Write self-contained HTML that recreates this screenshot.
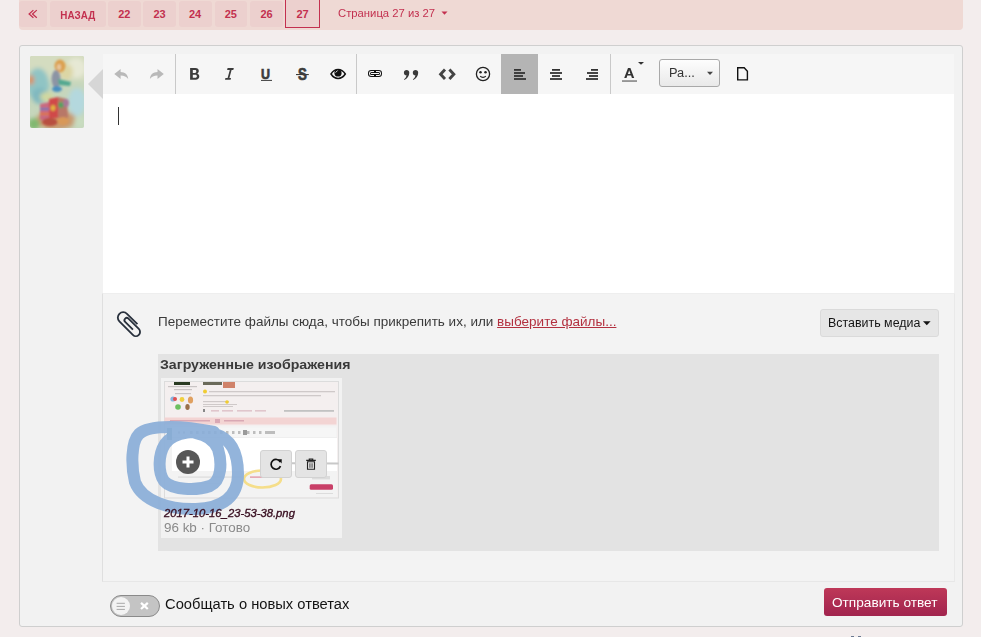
<!DOCTYPE html>
<html><head><meta charset="utf-8">
<style>
*{box-sizing:border-box;margin:0;padding:0}
html,body{width:981px;height:637px;overflow:hidden;background:#f3eded;font-family:"Liberation Sans",sans-serif;position:relative}
.a{position:absolute}
#pbar{left:19px;top:-4px;width:944px;height:34px;background:#efd9d4;border-radius:4px}
.pb{position:absolute;top:1px;height:25.5px;background:#ecd0ce;border-radius:3px;color:#c3304f;font-weight:bold;font-size:11px;text-align:center;line-height:25px;padding-top:1px}
.pt{display:inline-block}
#box{left:19px;top:45px;width:944px;height:582px;background:#f2f2f2;border:1px solid #cfcfcf;border-radius:3px}
#tb{left:103px;top:54px;width:851px;height:40px;background:#f6f6f6}
#ct{left:103px;top:94px;width:851px;height:199px;background:#fff}
#att{left:102px;top:293px;width:853px;height:289px;background:#f3f3f3;border-left:1px solid #dfdfdf;border-right:1px solid #e9e9e9;border-bottom:1px solid #e7e7e7;border-top:1px solid #eeeeee}
.sep{position:absolute;top:54px;width:1px;height:40px;background:#c9c9c9}
.ic{position:absolute}
.t{transform-origin:0 0;white-space:nowrap}
</style></head><body>
<div id="pbar" class="a"></div>
<div class="pb" style="left:19px;width:28px"></div>
<svg class="a" style="left:27px;top:8px" width="12" height="12"><path d="M6.4,2.1 L2.1,6 L6.4,9.7 M9.8,2.1 L5.5,6 L9.8,9.7" fill="none" stroke="#c3304f" stroke-width="1.25"/></svg>
<div class="pb" style="left:50px;width:56px"><span id="p_naz" class="pt" style="font-size:10px;transform:scaleX(0.985);position:relative;top:0.6px">НАЗАД</span></div>
<div class="pb" style="left:107.5px;width:33.5px"><span class="pt">22</span></div>
<div class="pb" style="left:143px;width:33px"><span class="pt">23</span></div>
<div class="pb" style="left:178.5px;width:33px"><span class="pt">24</span></div>
<div class="pb" style="left:214.5px;width:32.5px"><span class="pt">25</span></div>
<div class="pb" style="left:250px;width:33px"><span class="pt">26</span></div>
<div class="pb" style="left:285px;width:35px;top:-2px;height:29.5px;border:1px solid #c3304f;border-radius:0;padding-top:3px"><span class="pt">27</span></div>
<div id="t_page" class="a t" style="transform:scaleX(0.981);left:338px;top:6px;font-size:11.5px;color:#c3304f;line-height:14px">Страница 27 из 27</div>
<svg class="a" style="left:441px;top:11px" width="8" height="5"><path d="M0.5,0.5 H6.5 L3.5,3.8 Z" fill="#c3304f"/></svg>

<div id="box" class="a"></div>
<div id="tb" class="a"></div>
<div id="ct" class="a"></div>
<div id="att" class="a"></div>
<div class="sep" style="left:175px"></div>
<div class="sep" style="left:356px"></div>
<div class="sep" style="left:610px"></div>
<div class="a" style="left:501px;top:54px;width:37px;height:40px;background:#b4b4b4"></div>
<svg class="a" style="left:0;top:0" width="981" height="637" viewBox="0 0 981 637">
 <!-- undo -->
 <path fill="#b9b9b9" d="M114.3,73.9 L120.6,68.9 L120.6,71.9 C124.8,72 127.9,74.2 128.2,79 C126.6,76.9 124.2,75.6 120.6,75.6 L120.6,79 Z"/>
 <!-- redo -->
 <path fill="#b9b9b9" d="M163.8,73.9 L157.5,68.9 L157.5,71.9 C153.3,72 150.2,74.2 149.9,79 C151.5,76.9 153.9,75.6 157.5,75.6 L157.5,79 Z"/>
 <!-- bold -->
 <path fill="#3c3c3c" fill-rule="evenodd" d="M190.1,68.1 H195.3 C197.6,68.1 198.8,69.3 198.8,71 C198.8,72.2 198.2,73 197.2,73.5 C198.6,74 199.3,75.1 199.3,76.6 C199.3,78.6 197.9,79.7 195.6,79.7 H190.1 Z M192.8,70.1 V72.9 H194.9 C195.9,72.9 196.3,72.4 196.3,71.5 C196.3,70.6 195.9,70.1 194.9,70.1 Z M192.8,74.8 V77.8 H195.3 C196.4,77.8 196.9,77.2 196.9,76.3 C196.9,75.4 196.4,74.8 195.3,74.8 Z"/>
 <!-- italic -->
 <path fill="#3c3c3c" d="M227.6,68.1 H233.8 L233.3,69.9 H231.6 L229.4,78 H231 L230.6,79.7 H225 L225.4,78 H227.6 L229.8,69.9 H227.1 Z"/>
 <!-- underline -->
 <text x="318.4" y="78.8" font-family="Liberation Sans" font-weight="bold" font-size="15.2" fill="#3c3c3c" stroke="#3c3c3c" stroke-width="0.7" transform="scale(0.82,1)">U</text>
 <rect x="261" y="79.9" width="11" height="1" fill="#3c3c3c"/>
 <!-- strike -->
 <text x="363.3" y="79.9" font-family="Liberation Sans" font-weight="bold" font-size="16.2" fill="#3c3c3c" stroke="#3c3c3c" stroke-width="0.7" transform="scale(0.82,1)">S</text>
 <rect x="296" y="74" width="12.8" height="1.1" fill="#3c3c3c"/>
 <!-- eye -->
 <path fill="none" stroke="#111" stroke-width="1.5" d="M331,74 C333,70.8 335.3,69.6 338.1,69.6 C340.9,69.6 343.2,70.8 345.3,74 C343.2,77.2 340.9,78.4 338.1,78.4 C335.3,78.4 333,77.2 331,74 Z"/>
 <circle cx="338" cy="72.9" r="3.6" fill="#111"/>
 <path stroke="#f6f6f6" stroke-width="0.9" d="M335.6,72.6 L337.6,70.5"/>
 <!-- link -->
 <rect x="368" y="70" width="14" height="7" rx="3.2" fill="#111"/>
 <rect x="369" y="71" width="12" height="5" rx="2.2" fill="#f6f6f6"/>
 <rect x="370" y="72" width="10" height="3" rx="1.5" fill="#111"/>
 <rect x="371" y="73" width="8" height="1" fill="#f6f6f6"/>
 <rect x="374" y="71" width="2" height="1" fill="#111"/>
 <rect x="374" y="75" width="2" height="1" fill="#111"/>
 <!-- quote -->
 <path fill="#3a3a3a" d="M406.6,70 C408.2,70 409.3,71 409.3,72.7 C409.3,75.6 407.3,78.4 404.3,80 L404.0,79.5 C405.4,78.4 406.2,77.2 406.5,75.3 C404.9,75.3 403.9,74.3 403.9,72.7 C403.9,71.1 405.0,70 406.6,70 Z M415.5,70 C417.1,70 418.2,71 418.2,72.7 C418.2,75.6 416.2,78.4 413.2,80 L412.9,79.5 C414.3,78.4 415.1,77.2 415.4,75.3 C413.8,75.3 412.8,74.3 412.8,72.7 C412.8,71.1 413.9,70 415.5,70 Z"/>
 <!-- code -->
 <path fill="none" stroke="#444" stroke-width="2.9" stroke-linejoin="miter" d="M445,69.6 L440.6,74.3 L445,79 M449.4,69.6 L453.8,74.3 L449.4,79"/>
 <!-- smile -->
 <circle cx="483" cy="74" r="6.6" fill="none" stroke="#222" stroke-width="1.3"/>
 <circle cx="480.5" cy="72.2" r="1.25" fill="#222"/>
 <circle cx="485.5" cy="72.2" r="1.25" fill="#222"/>
 <path fill="none" stroke="#222" stroke-width="1.2" d="M480.2,76.2 C481.6,77.8 484.4,77.8 485.8,76.2"/>
 <!-- align left -->
 <g fill="#333"><rect x="514" y="69" width="7" height="1.8"/><rect x="514" y="72.1" width="11" height="1.8"/><rect x="514" y="75.1" width="9" height="1.8"/><rect x="514" y="78.1" width="12" height="1.8"/></g>
 <g fill="#333"><rect x="552" y="69" width="8" height="1.8"/><rect x="550" y="72.1" width="12" height="1.8"/><rect x="552" y="75.1" width="8" height="1.8"/><rect x="550" y="78.1" width="12" height="1.8"/></g>
 <g fill="#333"><rect x="591" y="69" width="7" height="1.8"/><rect x="587" y="72.1" width="11" height="1.8"/><rect x="589" y="75.1" width="9" height="1.8"/><rect x="586" y="78.1" width="12" height="1.8"/></g>
 <!-- font color A -->
 <path fill="#333" fill-rule="evenodd" d="M628,68 H630.4 L634.2,77.9 H631.9 L631.1,75.6 H627.3 L626.5,77.9 H624.2 Z M629.2,70.2 L627.9,73.9 H630.5 Z"/>
 <rect x="622" y="80.2" width="15" height="1.7" fill="#8c8c8c"/>
 <path fill="#333" d="M638,62 H644 L641,64.8 Z"/>
 <!-- doc -->
 <path fill="none" stroke="#111" stroke-width="1.4" d="M737.7,67.8 H744.2 L747.4,71.2 V79.9 H737.7 Z"/>
</svg>
<div class="a" style="left:659px;top:59px;width:61px;height:28px;border:1px solid #a9a9a9;border-radius:3px;background:linear-gradient(#fdfdfd,#e9e9e9)"></div>
<div id="t_ra" class="a t" style="transform:scaleX(1.065);left:669px;top:65px;font-size:12px;color:#333;line-height:16px">Ра...</div>
<svg class="a" style="left:706px;top:71px" width="8" height="5"><path d="M1,0.8 H7 L4,4 Z" fill="#444"/></svg>
<!-- avatar -->
<svg class="a" style="left:30px;top:56px" width="54" height="72" viewBox="0 0 54 72">
 <defs><filter id="bl" x="-30%" y="-30%" width="160%" height="160%"><feGaussianBlur stdDeviation="2.2"/></filter>
 <filter id="bl2" x="-30%" y="-30%" width="160%" height="160%"><feGaussianBlur stdDeviation="1"/></filter>
 <clipPath id="avc"><rect width="54" height="72" rx="2"/></clipPath></defs>
 <g clip-path="url(#avc)">
 <rect width="54" height="72" fill="#c6d6bc"/>
 <g filter="url(#bl)">
  <rect x="-5" y="-5" width="64" height="30" fill="#d4dcc0"/>
  <ellipse cx="8" cy="28" rx="11" ry="16" fill="#90c4c4"/>
  <ellipse cx="10" cy="40" rx="8" ry="8" fill="#7fb8c0"/>
  <ellipse cx="46" cy="12" rx="10" ry="10" fill="#e6e8d4"/>
  <ellipse cx="47" cy="46" rx="9" ry="14" fill="#b4d8de"/>
  <ellipse cx="36" cy="16" rx="7" ry="8" fill="#dcd6a4"/>
  <ellipse cx="1" cy="24" rx="3" ry="5" fill="#e08a50"/>
  <ellipse cx="17" cy="41" rx="7" ry="5" fill="#d0d8a0"/>
  <ellipse cx="26" cy="64" rx="20" ry="10" fill="#c89a70"/>
  <ellipse cx="4" cy="68" rx="6" ry="6" fill="#80b870"/>
  <ellipse cx="50" cy="66" rx="6" ry="6" fill="#c8dcc0"/>
 </g>
 <g filter="url(#bl2)">
  <ellipse cx="30" cy="10" rx="5.5" ry="6.5" fill="#dca050"/>
  <ellipse cx="29" cy="11" rx="2" ry="3" fill="#e8c8a0"/>
  <ellipse cx="26" cy="23" rx="4.5" ry="9" fill="#8c94a4"/>
  <path d="M28,23 L41,26 L40,30 L29,29 Z" fill="#52a890"/>
  <ellipse cx="27" cy="33" rx="5" ry="3" fill="#4a90c0"/>
  <path d="M10,48 L19,46 L19,64 L10,64 Z" fill="#c86a80"/>
  <rect x="10" y="52" width="9" height="2" fill="#6a78b8"/>
  <rect x="10" y="57" width="9" height="2" fill="#e07840"/>
  <path d="M19,43 L28,41 L28,62 L19,62 Z" fill="#d04848"/>
  <ellipse cx="23" cy="52" rx="2.5" ry="3" fill="#e0b040"/>
  <path d="M28,41 L37,43 L38,62 L28,62 Z" fill="#b87868"/>
  <ellipse cx="31" cy="49" rx="3" ry="3" fill="#58a060"/>
  <ellipse cx="36" cy="47" rx="3" ry="4" fill="#a87898"/>
  <ellipse cx="20" cy="66" rx="8" ry="4" fill="#b85040"/>
  <ellipse cx="33" cy="65" rx="6" ry="4" fill="#d89858"/>
 </g>
 </g>
</svg>
<svg class="a" style="left:88px;top:69px" width="15" height="30"><path d="M15,0 V30 L0,15 Z" fill="#d6d6d6"/></svg>
<div class="a" style="left:118px;top:107px;width:1px;height:18px;background:#333"></div>


<!-- attach -->
<svg class="a" style="left:105px;top:300px" width="48" height="48" viewBox="0 0 48 48">
 <g transform="translate(24.8,24.2) rotate(-45) scale(1.17)">
 <path fill="none" stroke="#28303c" stroke-width="1.55" stroke-linecap="butt" d="M4.6,4.6 V-8 A4.6,4.6 0 0 0 -4.6,-8 V8.3 A3.6,3.6 0 0 0 2.6,8.3 V-4.2 A2,2 0 0 0 -1.4,-4.2 V5.2"/>
 </g>
</svg>
<div id="t_drop" class="a t" style="transform:scaleX(1.0385);left:158px;top:314px;font-size:13px;color:#3a3a3a;line-height:16px;white-space:nowrap">Переместите файлы сюда, чтобы прикрепить их, или <span style="color:#b3303f;text-decoration:underline">выберите файлы...</span></div>
<div class="a" style="left:820px;top:309px;width:119px;height:28px;background:#e6e6e6;border:1px solid #dadada;border-radius:3px"></div>
<div id="t_media" class="a t" style="transform:scaleX(1.035);left:828px;top:315px;font-size:12px;color:#141414;line-height:16px;white-space:nowrap">Вставить медиа</div>
<svg class="a" style="left:923px;top:321px" width="8" height="5"><path d="M0,0.3 H7.6 L3.8,4.3 Z" fill="#141414"/></svg>
<div class="a" style="left:158px;top:354px;width:781px;height:197px;background:#e3e3e3"></div>
<div id="t_upl" class="a t" style="transform:scaleX(1.089);left:160px;top:357px;font-size:13px;font-weight:bold;color:#3a3a3a;line-height:16px;white-space:nowrap">Загруженные изображения</div>
<div class="a" style="left:161px;top:378px;width:181px;height:160px;background:#f2f2f2"></div>
<svg class="a" style="left:0;top:0" width="981" height="637" viewBox="0 0 981 637">
 <defs><filter id="tb1" x="-5%" y="-5%" width="110%" height="110%"><feGaussianBlur stdDeviation="0.45"/></filter></defs>
 <rect x="164.5" y="381.5" width="174" height="116.5" fill="#f4efef" stroke="#dcdcdc" stroke-width="1"/>
 <g filter="url(#tb1)">
 <rect x="174" y="382" width="16" height="3" fill="#2c3a22"/>
 <rect x="203" y="382" width="19" height="3" fill="#6b6b5a"/>
 <rect x="223" y="382" width="12" height="6" fill="#d0826a"/>
 <g fill="#c9c4c4"><rect x="168" y="386" width="29" height="1.2"/><rect x="174" y="389" width="18" height="1.2"/><rect x="175" y="393" width="16" height="1.2"/></g>
 <circle cx="173" cy="399" r="2.6" fill="#8bb4e0"/><circle cx="175" cy="399" r="2" fill="#e25050"/>
 <circle cx="182" cy="399.5" r="2.4" fill="#f0d040"/>
 <ellipse cx="190.5" cy="400" rx="2.6" ry="3.6" fill="#e0a060"/>
 <circle cx="178" cy="407" r="2.8" fill="#6cc060"/>
 <ellipse cx="187.5" cy="407" rx="2.2" ry="3" fill="#9a7048"/>
 <circle cx="205" cy="391.5" r="2" fill="#f0cc30"/>
 <g fill="#cfc9c9"><rect x="209" y="391" width="126" height="1.3"/><rect x="203" y="395" width="118" height="1.3"/><rect x="203" y="401" width="26" height="1.2"/><rect x="203" y="404" width="34" height="1"/><rect x="203" y="406" width="30" height="1"/></g>
 <circle cx="227" cy="402" r="1.8" fill="#f0cc30"/>
 <g fill="#e0c6cc"><rect x="211" y="410" width="8" height="1.6"/><rect x="222" y="410" width="11" height="1.6"/><rect x="237" y="410" width="15" height="1.6"/><rect x="255" y="410" width="11" height="1.6"/></g>
 <rect x="203" y="409" width="2" height="3" fill="#888"/>
 <rect x="284" y="410" width="50" height="1.8" fill="#c2c2c2"/>
 <rect x="164.5" y="417.5" width="172" height="7" fill="#f3d4d3"/>
 <g fill="#d9a8b4"><rect x="170" y="420" width="40" height="1.5"/><rect x="215" y="419" width="5" height="4"/><rect x="224" y="420" width="20" height="1.5"/></g>
 <rect x="165" y="426" width="172" height="71" fill="#f3f3f3"/>
 <rect x="172" y="427.5" width="164" height="10" fill="#f6f6f6"/>
 <rect x="167" y="428" width="5" height="12" fill="#7aa8a8"/>
 <g fill="#bdbdbd"><rect x="178" y="431.5" width="2" height="2"/><rect x="183" y="431.5" width="2" height="2"/><rect x="190" y="431" width="2.5" height="3"/><rect x="196" y="431" width="2.5" height="3"/><rect x="202" y="431" width="2.5" height="3"/><rect x="208" y="431" width="2.5" height="3"/><rect x="214" y="431" width="2.5" height="3"/><rect x="220" y="431" width="2.5" height="3"/><rect x="226" y="431" width="2.5" height="3"/><rect x="232" y="431" width="2.5" height="3"/><rect x="238" y="431" width="2.5" height="3"/><rect x="247" y="431" width="2.5" height="3"/><rect x="253" y="431" width="2.5" height="3"/><rect x="259" y="431" width="2.5" height="3"/><rect x="265" y="431" width="10" height="3"/></g>
 <rect x="243" y="430" width="4" height="5" fill="#9a9a9a"/>
 <rect x="172" y="437" width="165" height="34" fill="#ffffff"/>
 <rect x="172" y="437" width="165" height="0.8" fill="#ececec"/>
 <g fill="#dcdcdc"><rect x="178" y="476.5" width="64" height="1.2"/><rect x="184" y="483" width="36" height="1.2"/><rect x="312" y="476" width="18" height="3.4"/><rect x="316" y="493" width="17" height="1"/></g>
 <rect x="250" y="476.5" width="22" height="1.2" fill="#e08a9a"/>
 <rect x="309.7" y="484.3" width="23.3" height="5.4" rx="1.5" fill="#c94068"/>
 <path d="M292,463.3 L338.6,463.6" stroke="#c8c8c8" stroke-width="2"/>
 </g>
 <ellipse cx="262.5" cy="479" rx="18.5" ry="8.5" fill="none" stroke="#f5de8a" stroke-width="2.6"/>
 <!-- blue scribble -->
 <g fill="none" stroke="#8aaed8" stroke-opacity="0.92" stroke-width="12" stroke-linecap="round" stroke-linejoin="round">
  <path d="M214,432 C185,426 150,424 139,434 C131,442 131,466 135,482 C142,501 170,510 196,509 C224,508 238,496 238,474 C238,452 231,439 215,434 C198,430 174,431 165,444 C158,455 158,472 164,481 C172,490 196,491 210,486 C222,481 222,462 218,449 C214,440 207,435 196,433"/>
 </g>
</svg>
<div class="a" style="left:176px;top:450px;width:24px;height:24px;border-radius:12px;background:#575757"></div>
<svg class="a" style="left:176px;top:450px" width="24" height="24"><path d="M12,6.5 V17.5 M6.5,12 H17.5" stroke="#fff" stroke-width="3"/></svg>
<div class="a" style="left:260px;top:450px;width:32px;height:28px;border-radius:3px;background:#e4e4e4;border:1px solid #d2d2d2"></div>
<div class="a" style="left:295px;top:450px;width:32px;height:28px;border-radius:3px;background:#e4e4e4;border:1px solid #d2d2d2"></div>
<svg class="a" style="left:268px;top:456px" width="16" height="16"><path d="M12.3,6 A4.9,4.9 0 1 0 12.5,10.2" fill="none" stroke="#111" stroke-width="1.7"/><path d="M9.8,3.2 L13.8,3.2 L13.6,7.6 Z" fill="#111"/></svg>
<svg class="a" style="left:303px;top:456px" width="16" height="16"><path d="M3.2,4.3 H12.8 M6.3,4.3 V3 H9.7 V4.3" fill="none" stroke="#222" stroke-width="1.2"/><path d="M4.5,5.8 H11.5 V13.2 H4.5 Z" fill="none" stroke="#222" stroke-width="1.1"/><path d="M6.7,7.3 V11.8 M8,7.3 V11.8 M9.3,7.3 V11.8" stroke="#555" stroke-width="0.8"/></svg>
<div id="t_fn" class="a t" style="transform:scaleX(1.024);left:164px;top:505px;font-size:11px;font-weight:normal;-webkit-text-stroke:0.35px #3a1022;font-style:italic;color:#3a1022;line-height:16px;white-space:nowrap">2017-10-16_23-53-38.png</div>
<div id="t_kb" class="a t" style="transform:scaleX(1.117);left:164px;top:519.6px;font-size:12px;color:#8a8a8a;line-height:16px;white-space:nowrap">96 kb · Готово</div>
<!-- toggle -->
<div class="a" style="left:110px;top:595px;width:50px;height:22px;border:1.6px solid #8a8a8a;border-radius:11px;background:#c4c4c4"></div>
<div class="a" style="left:112px;top:596.8px;width:18.3px;height:18.3px;border-radius:50%;background:#f3f3f3"></div>
<svg class="a" style="left:110px;top:595px" width="50" height="22"><g stroke="#a8a8a8" stroke-width="1"><path d="M6.6,8.3 H14.9 M6.6,11.4 H14.9 M6.6,14.4 H14.9"/></g><path d="M31,7.9 L37.8,14 M37.8,7.9 L31,14" stroke="#fff" stroke-width="2.3"/></svg>
<div id="t_watch" class="a t" style="transform:scaleX(1.051);left:165px;top:596px;font-size:14px;color:#141414;line-height:16px;white-space:nowrap">Сообщать о новых ответах</div>
<div class="a" style="left:824px;top:588px;width:123px;height:28px;border-radius:3px;background:linear-gradient(#be3858,#a1244e)"></div>
<div id="t_send" class="a t" style="transform:scaleX(1.049);left:831.5px;top:595px;font-size:13px;color:#fff;line-height:16px;white-space:nowrap">Отправить ответ</div>
<div class="a" style="left:851px;top:635.6px;width:3px;height:1.4px;background:#6a7890"></div>
<div class="a" style="left:858px;top:635.6px;width:3px;height:1.4px;background:#6a7890"></div>
</body></html>
